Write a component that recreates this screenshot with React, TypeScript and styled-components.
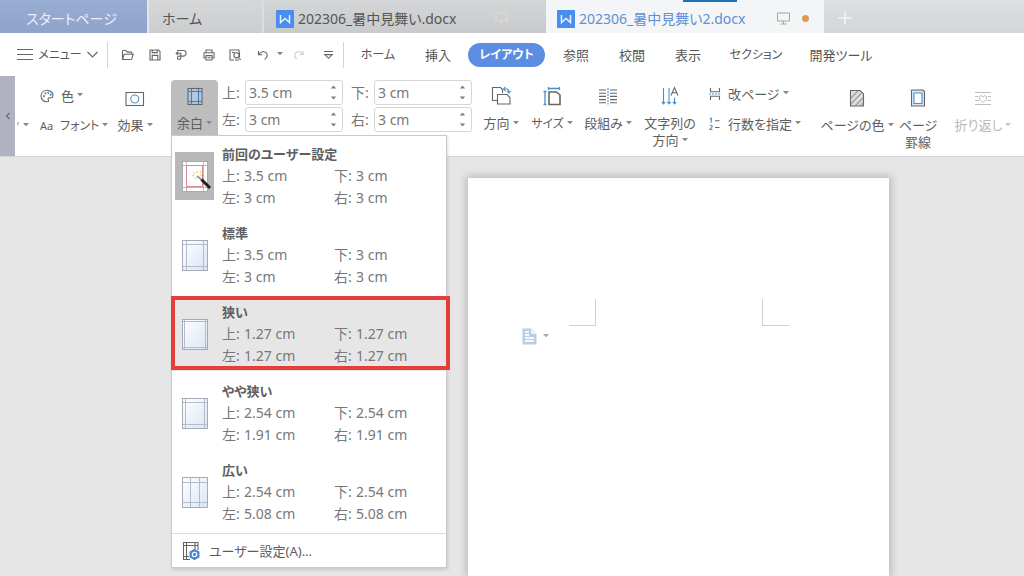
import React from "react";
import styled, { createGlobalStyle, css } from "styled-components";

const GlobalStyle = createGlobalStyle`
  *, *::before, *::after { box-sizing: border-box; }
  body {
    margin: 0;
    background: #e6e6e6;
    color: #5e5e5e;
    font: 13px/18px "Noto Sans", "Noto Sans CJK JP", sans-serif;
    font-feature-settings: "palt";
  }
  button, input {
    margin: 0;
    padding: 0;
    border: 0;
    background: none;
    color: inherit;
    font: inherit;
    font-feature-settings: inherit;
  }
  svg { display: block; flex: none; }
`;

const Window = styled.div`
  min-height: 100vh;
  display: flex;
  flex-direction: column;
  overflow: clip;
`;

/* ---------- document tabs ---------- */

const TabBar = styled.div`
  display: flex;
  height: 33px;
  background: linear-gradient(#dddfe1, #d3d6d8);
  overflow: hidden;
`;

const tabKinds = {
  start: css`
    flex-basis: 149px;
    justify-content: center;
    padding-right: 4px;
    color: #e8eefa;
    background: linear-gradient(#9aaed3, #8fa3cb);
    border-right: 2px solid #e3e5e8;
  `,
  home: css`
    flex-basis: 115px;
    padding-left: 13px;
    background: linear-gradient(#d6d7d8, #cccdce);
    border-right: 2px solid #dcdddf;
  `,
  doc: css`
    flex-basis: 282px;
    padding-left: 12px;
    padding-right: 38px;
    background: linear-gradient(#d4d5d6, #c9cacb);
  `,
  active: css`
    flex-basis: 278px;
    padding-left: 11px;
    padding-right: 15px;
    color: #5f8fd6;
    background: #f4f5f6;
  `,
};

const DocTab = styled.button<{ $kind: keyof typeof tabKinds }>`
  flex: 0 0 auto;
  display: flex;
  align-items: center;
  gap: 4px;
  padding-top: 4px;
  color: #555;
  font-size: 14px;
  white-space: nowrap;
  position: relative;
  ${(p) => tabKinds[p.$kind]}
`;

const TabLabel = styled.span`
  padding-top: 1px;
`;

const TabEnd = styled.span`
  margin-left: auto;
  display: flex;
  align-items: center;
  gap: 12px;
`;

const Dot = styled.span`
  width: 7px;
  height: 7px;
  border-radius: 50%;
  background: #dd9a55;
`;

const LoadMark = styled.span`
  position: absolute;
  top: 0;
  right: 87px;
  width: 54px;
  height: 2px;
  background: #1a73b5;
`;

const NewTab = styled.button`
  display: flex;
  align-items: center;
  padding: 2px 14px 0;
`;

/* ---------- menu bar ---------- */

const MenuBar = styled.div`
  display: flex;
  align-items: center;
  height: 43px;
  background: #fff;
  padding-left: 17px;
  color: #555;
`;

const MenuButton = styled.button`
  display: flex;
  align-items: center;
  justify-content: space-between;
  width: 81px;
  margin-right: 9px;
  font-size: 12px;
`;

const Divider = styled.span`
  width: 1px;
  height: 26px;
  background: #d4d4d4;
`;

const QuickTools = styled.div`
  display: flex;
  align-items: center;
  width: 235px;
  padding-left: 6px;
`;

const ToolButton = styled.button<{ $width?: number }>`
  display: flex;
  justify-content: center;
  width: ${(p) => p.$width ?? 27}px;
`;

const Nav = styled.nav`
  display: flex;
  align-items: center;
  padding-left: 4px;
`;

const NavTab = styled.button<{ $width: number; $active?: boolean; $kana?: boolean }>`
  width: ${(p) => p.$width}px;
  height: 24px;
  white-space: nowrap;
  font-size: ${(p) => (p.$kana ? 12 : 13)}px;
  ${(p) =>
    p.$active &&
    css`
      margin-right: 3px;
      border-radius: 12px;
      color: #fff;
      background: #5b8ee3;
      font-weight: 700;
    `}
`;

/* ---------- ribbon ---------- */

const Ribbon = styled.div`
  display: flex;
  height: 81px;
  background: #fff;
  border-bottom: 1px solid #d6d6d6;
  position: relative;
  z-index: 1;
`;

const Collapse = styled.button`
  display: flex;
  align-items: center;
  justify-content: center;
  width: 15px;
  height: 80px;
  flex: none;
  background: #b0b3bf;
`;

const HiddenEdge = styled.div`
  flex: 0 0 25px;
  display: flex;
  gap: 4px;
  padding: 46px 0 0 2px;
`;

const SmallColumn = styled.div<{ $width: number }>`
  flex: 0 0 ${(p) => p.$width}px;
  display: flex;
  flex-direction: column;
  gap: 12px;
  padding-top: 11px;
`;

const BreakColumn = styled(SmallColumn)`
  padding: 9px 0 0 7px;
`;

const SmallButton = styled.button<{ $kana?: boolean }>`
  display: flex;
  align-items: center;
  gap: 7px;
  white-space: nowrap;
  font-size: ${(p) => (p.$kana ? 12 : 13)}px;
`;

const AaMark = styled.span`
  width: 13px;
  font-size: 11px;
`;

const LabelWithCaret = styled.span`
  display: inline-flex;
  align-items: center;
  gap: 3px;
  white-space: nowrap;
`;

const BigButton = styled.button<{ $width: number; $low?: boolean; $muted?: boolean; $kana?: boolean }>`
  flex: 0 0 ${(p) => p.$width}px;
  display: flex;
  flex-direction: column;
  align-items: center;
  align-self: flex-start;
  gap: 9px;
  padding-top: ${(p) => (p.$low ? 12 : 10)}px;
  font-size: ${(p) => (p.$kana ? 12 : 13)}px;
  line-height: 17px;
  color: ${(p) => (p.$muted ? "#b9b9b9" : "inherit")};
`;

const Lines = styled.span`
  display: flex;
  flex-direction: column;
  align-items: center;
`;

const MarginAnchor = styled.div`
  flex: 0 0 47px;
  margin-left: 11px;
  padding-top: 4px;
  position: relative;
`;

const MarginButton = styled.button`
  width: 47px;
  height: 55px;
  display: flex;
  flex-direction: column;
  align-items: center;
  gap: 9px;
  padding-top: 6px;
  line-height: 17px;
  border-radius: 4px 4px 0 0;
  background: #bdbdbd;
`;

const Fields = styled.div`
  display: grid;
  grid-template-columns: 121px 121px;
  column-gap: 8px;
  row-gap: 2px;
  align-content: start;
  padding: 4px 4px 0;
  flex: 0 0 257px;
  font-size: 14px;
  color: #777;
`;

const Field = styled.label`
  display: flex;
  align-items: center;
  justify-content: space-between;
`;

const FieldBox = styled.span`
  display: flex;
  align-items: center;
  width: 98px;
  height: 25px;
  padding: 0 5px 0 3px;
  border: 1px solid #d6d6d6;
  border-radius: 3px;
`;

const FieldInput = styled.input`
  flex: 1;
  min-width: 0;
  outline: none;
`;

const WrapIconBox = styled.span`
  display: flex;
  align-items: center;
  height: 20px;
`;

const EdgeLabel = styled.span`
  padding-top: 41px;
  white-space: nowrap;
`;

/* ---------- margins menu ---------- */

const Menu = styled.div`
  position: absolute;
  top: 59px;
  left: 0;
  width: 276px;
  background: #fff;
  border: 1px solid #c9c9c9;
  box-shadow: 1px 2px 3px rgba(0, 0, 0, 0.12);
`;

const Presets = styled.div`
  padding-bottom: 2px;
  border-bottom: 1px solid #dcdcdc;
`;

const Preset = styled.button<{ $marked?: boolean }>`
  position: relative;
  display: flex;
  align-items: center;
  gap: 8px;
  width: 100%;
  height: 79px;
  padding-left: 3px;
  text-align: left;
  font-size: 14px;
  line-height: 22px;
  color: #777;
  background: ${(p) => (p.$marked ? "linear-gradient(#fff 3px, #e6e6e6 3px 77px, #fff 77px)" : "none")};
`;

const MarkFrame = styled.span`
  position: absolute;
  inset: 2px -4px 3px -1px;
  border: 4px solid #e53c3c;
`;

const Thumb = styled.span<{ $selected?: boolean }>`
  display: flex;
  align-items: center;
  justify-content: center;
  width: 39px;
  height: 48px;
  background: ${(p) => (p.$selected ? "#b8b8b8" : "none")};
`;

const PresetText = styled.span`
  display: grid;
  grid-template-columns: 112px 112px;
`;

const PresetName = styled.strong`
  grid-column: 1 / -1;
  font-size: 13px;
  color: #5e5e5e;
`;

const Measure = styled.span`
  display: flex;
`;

const MeasureSide = styled.span`
  width: 22px;
`;

const CustomItem = styled.button`
  display: flex;
  align-items: center;
  gap: 9px;
  width: 100%;
  height: 33px;
  padding: 0 0 0 10px;
`;

/* ---------- document ---------- */

const Canvas = styled.main`
  flex: 1;
  display: flex;
  padding: 21px 135px 0 468px;
  background: #e6e6e6;
`;

const Sheet = styled.section`
  flex: 1;
  background: #fff;
  box-shadow: 0 0 8px 2px rgba(0, 0, 0, 0.2);
`;

const Corners = styled.div`
  display: flex;
  justify-content: space-between;
  padding: 121px 100px 0 101px;
`;

const Corner = styled.span<{ $side: "left" | "right" }>`
  width: 27px;
  height: 27px;
  border-bottom: 1px solid #cfcfcf;
  ${(p) => (p.$side === "left" ? "border-right" : "border-left")}: 1px solid #cfcfcf;
`;

const PasteHint = styled.button`
  display: flex;
  align-items: center;
  gap: 6px;
  margin: 2px 0 0 54px;
`;

/* ---------- icons ---------- */

const ink = "#666";
const blue = "#4a90cc";

const Svg = ({ w, h, children }: { w: number; h: number; children: React.ReactNode }) => (
  <svg width={w} height={h} viewBox={`0 0 ${w} ${h}`} fill="none" stroke={ink} strokeWidth="1.1" aria-hidden="true">
    {children}
  </svg>
);

const Caret = ({ color = "#858585" }: { color?: string }) => (
  <svg width="6" height="8" viewBox="0 0 6 8" aria-hidden="true">
    <path d="M0 1h6L3 4.200z" fill={color} />
  </svg>
);

const WriterLogo = () => (
  <svg width="18" height="18" viewBox="0 0 18 18" fill="none" aria-hidden="true">
    <rect width="18" height="18" rx="1" fill="#4a8df0" />
    <path d="M4.500 5v7.500L9 8.500l4.500 4V5" stroke="#e9f2ff" strokeWidth="1.500" />
  </svg>
);

const Spinner = () => (
  <svg width="7" height="17" viewBox="0 0 7 17" fill="#7d7d7d" aria-hidden="true">
    <path d="M.8 4.500h5.400L3.500 1.500zM.8 12.500h5.400l-2.700 3z" />
  </svg>
);

const FolderIcon = () => (
  <Svg w={13} h={12}>
    <path d="M1.500 10.500V2.200q0-.7.7-.7h2.600l1.400 1.600h3.900q.7 0 .7.7v1.300M1.500 10.500l1.700-5.300h9l-1.400 4.700q-.2.600-.8.600z" />
  </Svg>
);
const SaveIcon = () => (
  <Svg w={12} h={12}>
    <path d="M1 1h8.500L11 2.500V11H1zM3.200 1v2.600h5V1M3.200 11V6.400h5.600V11" />
  </Svg>
);
const ExportIcon = () => (
  <Svg w={13} h={12}>
    <path d="M2 1.500h6.300a2.800 2.800 0 0 1 0 5.600H5.800V8.800a1.700 1.700 0 1 1-1.700-1.700H5.800V4.200M1 4.200h5.500M3.200 2.600 1.200 4.200l2 1.600" />
  </Svg>
);
const PrintIcon = () => (
  <Svg w={12} h={12}>
    <path d="M3 3.600V1h6v2.600M3 9H1V3.700h10V9H9M3 6.600h6V11H3zM4.500 8.800h3" />
  </Svg>
);
const PreviewIcon = () => (
  <Svg w={13} h={12}>
    <path d="M5 11H1V1h9v2M3 3.500h2.500" />
    <circle cx="7.500" cy="6.300" r="2.600" />
    <path d="M9.300 8.200 11.800 11M10.500 3v5M6 11h4" />
  </Svg>
);
const UndoIcon = () => (
  <Svg w={12} h={12}>
    <path d="M1.500 2v3.800h3.800M1.800 5.500C4 2.500 7 2 9 3.700s1.600 4.500-1.500 6.700" />
  </Svg>
);
const RedoIcon = () => (
  <svg width="12" height="12" viewBox="0 0 12 12" fill="none" stroke="#cdcdcd" strokeWidth="1.100" aria-hidden="true">
    <path d="M10 2v3.500H6.500M9.800 5.300C8 2.500 5 2 3 3.700s-1.600 4.500.7 6.300" />
  </svg>
);
const MoreIcon = () => (
  <Svg w={11} h={10}>
    <path d="M1 1.500h9M1.800 4.600h7.400L5.500 8.300z" />
  </Svg>
);

const PaletteIcon = () => (
  <Svg w={14} h={14}>
    <path d="M8.500 12.500C4 13.500 1 10.800 1 7s3-5.800 6.200-5.800S13 3.600 13 6.300c0 2.200-1.500 2.700-3 2.500-1.800-.2-2.300.7-1.800 1.800.3.800.6 1.500.3 1.900z" />
    <g fill={blue} stroke="none">
      <circle cx="4" cy="7.200" r="1.100" />
      <circle cx="5.300" cy="4.300" r="1.100" />
      <circle cx="8.300" cy="3.700" r="1.100" />
      <circle cx="10.700" cy="5.700" r="1.100" />
    </g>
  </Svg>
);
const EffectIcon = () => (
  <Svg w={20} h={20}>
    <rect x="1" y="4.500" width="17.500" height="13" />
    <circle cx="9.800" cy="11" r="4" stroke={blue} />
  </Svg>
);
const MarginIcon = () => (
  <Svg w={16} h={20}>
    <rect x="1" y="2.500" width="14" height="16" fill="#b3c9de" />
    <path d="M4.500 2.500v16M11.500 2.500v16M1 5.500h14M1 15.500h14" stroke="#3f7db8" />
  </Svg>
);
const OrientIcon = () => (
  <Svg w={20} h={20}>
    <path d="M6.500 14.500H1.500v-13h8l2 2V7" />
    <path d="M6.500 8.500h9.500l3 3v6.500H6.500z" />
    <path d="M12.500 3h3.500q2 0 2 3.500M14.500.8 12.500 3l2 2.200M16 5l2 2 1.800-2" stroke={blue} />
  </Svg>
);
const SizeIcon = () => (
  <Svg w={18} h={20}>
    <path d="M6 6h7.500L17 9v9.500H6z" strokeWidth="1.600" />
    <path d="M2 5.500v13M.5 5.500h3M.5 18.500h3M5.500 2.500h11M5.500 1v3M16.500 1v3" stroke={blue} strokeWidth="1.300" />
  </Svg>
);
const ColumnsIcon = () => (
  <Svg w={20} h={20}>
    <path d="M1 4h7M1 7.200h7M1 10.400h7M1 13.600h7M1 16.800h7M12 4h7M12 7.200h7M12 10.400h7M12 13.600h7M12 16.800h7" />
    <path d="M10 2v16.500" stroke={blue} strokeDasharray="2 1" />
  </Svg>
);
const TextDirIcon = () => (
  <Svg w={18} h={20}>
    <path d="m10 9.500 3.500-8 3.500 8M11.200 6.800h4.600" />
    <path d="M2.500 2v15.500M8 2v15.500M13.500 11.500v6M.8 15.800l1.700 2 1.700-2M6.300 15.800l1.700 2 1.700-2M11.800 15.800l1.700 2 1.700-2" stroke={blue} />
  </Svg>
);
const BreakIcon = () => (
  <Svg w={12} h={14}>
    <path d="M1.500 1v3.800h9V1M1.500 13V9.200h9V13" />
    <path d="M0 7h12" stroke={blue} strokeDasharray="2 1" />
  </Svg>
);
const LineNumIcon = () => (
  <Svg w={12} h={14}>
    <path d="M6 3.800h4.500M6 10.500h4.500" />
    <path d="M1 2.200 2.300 1.200v4.500M.8 8.700q1.500-1 2.300.1T.8 12.500h2.700" stroke={blue} />
  </Svg>
);
const PageColorIcon = () => (
  <Svg w={16} h={20}>
    <path d="M1.500 2.500H11L14.500 6v12h-13z" fill="#dedede" />
    <path d="m2 10 7-7M2 16l10-10.500M6 18l8-8M11 18l3-3" stroke="#9a9a9a" />
  </Svg>
);
const PageBorderIcon = () => (
  <Svg w={16} h={20}>
    <path d="M1.500 2h11.500l1.500 1.500V18h-13z" fill="#d4e6f5" />
    <path d="M4 5h8v10.500H4z" fill="#fff" stroke={blue} />
  </Svg>
);
const WrapIcon = () => (
  <svg width="18" height="18" viewBox="0 0 18 18" fill="none" stroke="#bdbdbd" aria-hidden="true">
    <path d="M1 3.500h16M1 7.500h3M14 7.500h3M1 11.500h4M13 11.500h4M1 15.500h16M9 13.500 5.500 10V7.500L7 6.500l2 1.500 2-1.500 1.500 1V10z" />
  </svg>
);
const MonitorIcon = () => (
  <svg width="13" height="13" viewBox="0 0 13 13" fill="none" stroke="#a5a5a5" aria-hidden="true">
    <path d="M.5 1h12v8H.5zM6.500 9v3M3.500 12h6" />
  </svg>
);
const GhostMonitor = () => (
  <svg width="13" height="13" viewBox="0 0 13 13" fill="none" stroke="#dcdcdc" aria-hidden="true">
    <path d="M1 1h11v8H8l-2 2.500V9H1z" />
  </svg>
);

const PageThumb = ({ left, right, edge, wand }: { left: number; right: number; edge: number; wand?: boolean }) => (
  <svg width="36" height="38" viewBox="0 0 36 38" fill="none" aria-hidden="true">
    <defs>
      <linearGradient id="paper" x1="0" y1="0" x2="1" y2="1">
        <stop offset="0" stopColor="#ffffff" />
        <stop offset="1" stopColor="#dbe5f4" />
      </linearGradient>
    </defs>
    <rect x="5.500" y="4.500" width="25" height="30" fill={wand ? "#fff" : "url(#paper)"} stroke="#a3abb8" />
    <path
      d={`M${5 + left}.5 5v29M${30 - right}.5 5v29M6 ${4 + edge}.5h24M6 ${34 - edge}.5h24`}
      stroke={wand ? "#c3b4ba" : "#b3bdca"}
    />
    {wand && (
      <>
        <path d="M9.500 8.500h16v21h-16z" stroke="#e08794" />
        <path d="m20 19 5 4" stroke="#9a9a9a" strokeWidth="2" />
        <path d="m24.500 22.500 8.500 8.500" stroke="#1f1f1f" strokeWidth="3" />
        <path d="M15.500 18.500h1.500M20 14v1.500M17 15.500l1 1M24 14.500l-1 1M18 21.500l1-.500M23.500 18h1.500" stroke="#f3c05a" strokeWidth="1.500" />
      </>
    )}
  </svg>
);

const CustomIcon = () => (
  <Svg w={18} h={20}>
    <path d="M16 9V1.500H1.500v17H8M4.500 1.500v17M13 1.500V8M1.500 4.500H16M1.500 15.500H7" />
    <path
      d="m12.500 8.500 4.400 2.500v5l-4.400 2.500L8.100 16v-5z"
      fill="#4a8dd6"
      stroke="#3f80cc"
      strokeLinejoin="round"
    />
    <circle cx="12.500" cy="13.500" r="2.200" stroke="#fff" />
  </Svg>
);
const PasteIcon = () => (
  <svg width="15" height="17" viewBox="0 0 15 17" aria-hidden="true">
    <path d="M.5.500h9L14.500 6v10.500H.5z" fill="#bccde2" />
    <path d="M9 .5 14.500 6H9z" fill="#eef4fb" />
    <path d="M3 4h4M3 7h4M3 10h9M3 13h9" stroke="#f5f9fd" strokeWidth="1.800" />
  </svg>
);

/* ---------- data ---------- */

const presets = [
  { name: "前回のユーザー設定", sides: ["3.5", "3", "3", "3"], thumb: { left: 4, right: 4, edge: 4, wand: true }, selected: true },
  { name: "標準", sides: ["3.5", "3", "3", "3"], thumb: { left: 4, right: 4, edge: 4 } },
  { name: "狭い", sides: ["1.27", "1.27", "1.27", "1.27"], thumb: { left: 2, right: 2, edge: 2 }, marked: true },
  { name: "やや狭い", sides: ["2.54", "2.54", "1.91", "1.91"], thumb: { left: 3, right: 3, edge: 4 } },
  { name: "広い", sides: ["2.54", "2.54", "5.08", "5.08"], thumb: { left: 8, right: 8, edge: 5 } },
];

const sideLabels = ["上:", "下:", "左:", "右:"];

const navTabs = [
  { label: "ホーム", width: 60, kana: true },
  { label: "挿入", width: 60 },
  { label: "レイアウト", width: 77, active: true, kana: true },
  { label: "参照", width: 56 },
  { label: "校閲", width: 56 },
  { label: "表示", width: 56 },
  { label: "セクション", width: 80, kana: true },
  { label: "開発ツール", width: 90 },
];

const fieldValues = ["3.5 cm", "3 cm", "3 cm", "3 cm"];

const Drop = ({ children, color }: { children: React.ReactNode; color?: string }) => (
  <LabelWithCaret>
    {children}
    <Caret color={color} />
  </LabelWithCaret>
);

export default function App() {
  return (
    <Window>
      <GlobalStyle />
      <TabBar>
        <DocTab $kind="start"><TabLabel>スタートページ</TabLabel></DocTab>
        <DocTab $kind="home"><TabLabel>ホーム</TabLabel></DocTab>
        <DocTab $kind="doc">
          <WriterLogo />
          <TabLabel>202306_暑中見舞い.docx</TabLabel>
          <TabEnd><GhostMonitor /></TabEnd>
        </DocTab>
        <DocTab $kind="active">
          <LoadMark />
          <WriterLogo />
          <TabLabel>202306_暑中見舞い2.docx</TabLabel>
          <TabEnd><MonitorIcon /><Dot /></TabEnd>
        </DocTab>
        <NewTab aria-label="新しいタブ">
          <svg width="14" height="14" viewBox="0 0 14 14" stroke="#f4f5f6" strokeWidth="1.500">
            <path d="M7 .5v13M.5 7h13" />
          </svg>
        </NewTab>
      </TabBar>

      <MenuBar>
        <MenuButton>
          <Svg w={16} h={14}><path d="M0 1.500h16M0 6.500h16M0 11.500h16" /></Svg>
          メニュー
          <Svg w={11} h={8}><path d="m.5 1 5 5 5-5" /></Svg>
        </MenuButton>
        <Divider />
        <QuickTools>
          <ToolButton aria-label="開く"><FolderIcon /></ToolButton>
          <ToolButton aria-label="保存"><SaveIcon /></ToolButton>
          <ToolButton aria-label="エクスポート"><ExportIcon /></ToolButton>
          <ToolButton aria-label="印刷"><PrintIcon /></ToolButton>
          <ToolButton aria-label="印刷プレビュー"><PreviewIcon /></ToolButton>
          <ToolButton aria-label="元に戻す"><UndoIcon /></ToolButton>
          <ToolButton aria-label="履歴" $width={7}><Caret /></ToolButton>
          <ToolButton aria-label="やり直し" $width={32}><RedoIcon /></ToolButton>
          <ToolButton aria-label="その他"><MoreIcon /></ToolButton>
        </QuickTools>
        <Divider />
        <Nav>
          {navTabs.map((t) => (
            <NavTab key={t.label} $width={t.width} $active={t.active} $kana={t.kana}>{t.label}</NavTab>
          ))}
        </Nav>
      </MenuBar>

      <Ribbon>
        <Collapse aria-label="左へスクロール">
          <Svg w={6} h={8}><path d="M4.500 1 1.500 4l3 3" /></Svg>
        </Collapse>
        <HiddenEdge>
          <svg width="2" height="6" viewBox="0 0 2 6" stroke="#888"><path d="M1.500 0 .5 3" /></svg>
          <Caret />
        </HiddenEdge>
        <SmallColumn $width={70}>
          <SmallButton><PaletteIcon /><Drop>色</Drop></SmallButton>
          <SmallButton $kana><AaMark>Aa</AaMark><Drop>フォント</Drop></SmallButton>
        </SmallColumn>
        <BigButton $width={50} $low>
          <EffectIcon />
          <Drop>効果</Drop>
        </BigButton>

        <MarginAnchor>
          <MarginButton aria-expanded="true">
            <MarginIcon />
            <Drop>余白</Drop>
          </MarginButton>
          <Menu role="menu">
            <Presets>
              {presets.map((p) => (
                <Preset key={p.name} role="menuitem" $marked={p.marked}>
                  <Thumb $selected={p.selected}><PageThumb {...p.thumb} /></Thumb>
                  <PresetText>
                    <PresetName>{p.name}</PresetName>
                    {p.sides.map((value, i) => (
                      <Measure key={sideLabels[i]}>
                        <MeasureSide>{sideLabels[i]}</MeasureSide>
                        {value} cm
                      </Measure>
                    ))}
                  </PresetText>
                  {p.marked && <MarkFrame />}
                </Preset>
              ))}
            </Presets>
            <CustomItem role="menuitem"><CustomIcon />ユーザー設定(A)...</CustomItem>
          </Menu>
        </MarginAnchor>

        <Fields>
          {fieldValues.map((value, i) => (
            <Field key={sideLabels[i]}>
              {sideLabels[i]}
              <FieldBox>
                <FieldInput defaultValue={value} />
                <Spinner />
              </FieldBox>
            </Field>
          ))}
        </Fields>

        <BigButton $width={50}><OrientIcon /><Drop>方向</Drop></BigButton>
        <BigButton $width={52} $kana><SizeIcon /><Drop>サイズ</Drop></BigButton>
        <BigButton $width={60}><ColumnsIcon /><Drop>段組み</Drop></BigButton>
        <BigButton $width={64}>
          <TextDirIcon />
          <Lines><span>文字列の</span><Drop>方向</Drop></Lines>
        </BigButton>
        <BreakColumn $width={117}>
          <SmallButton><BreakIcon /><Drop>改ページ</Drop></SmallButton>
          <SmallButton><LineNumIcon /><Drop>行数を指定</Drop></SmallButton>
        </BreakColumn>
        <BigButton $width={76} $low><PageColorIcon /><Drop>ページの色</Drop></BigButton>
        <BigButton $width={46} $low>
          <PageBorderIcon />
          <Lines><span>ページ</span><span>罫線</span></Lines>
        </BigButton>
        <BigButton $width={84} $low $muted>
          <WrapIconBox><WrapIcon /></WrapIconBox>
          <Drop color="#c4c4c4">折り返し</Drop>
        </BigButton>
        <EdgeLabel>配置</EdgeLabel>
      </Ribbon>

      <Canvas>
        <Sheet>
          <Corners>
            <Corner $side="left" />
            <Corner $side="right" />
          </Corners>
          <PasteHint aria-label="貼り付けオプション"><PasteIcon /><Caret color="#a8a8a8" /></PasteHint>
        </Sheet>
      </Canvas>
    </Window>
  );
}
